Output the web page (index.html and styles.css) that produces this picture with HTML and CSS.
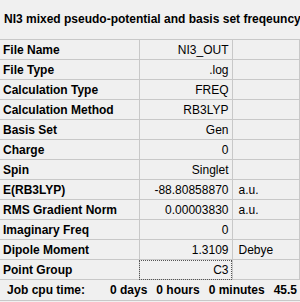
FILE: index.html
```html
<!DOCTYPE html>
<html lang="en">
<head>
    <meta charset="UTF-8">
    <title>NI3 Frequency Summary</title>
    <link rel="stylesheet" href="styles.css">
</head>
<body>
    <div class="summary">
        <div class="summary-title">NI3 mixed pseudo-potential and basis set freqeuncy</div>

        <table class="results">
            <colgroup>
                <col class="col-name">
                <col class="col-value">
                <col class="col-unit">
            </colgroup>
            <tr><th>File Name</th><td class="value">NI3_OUT</td><td></td></tr>
            <tr><th>File Type</th><td class="value">.log</td><td></td></tr>
            <tr><th>Calculation Type</th><td class="value">FREQ</td><td></td></tr>
            <tr><th>Calculation Method</th><td class="value">RB3LYP</td><td></td></tr>
            <tr><th>Basis Set</th><td class="value">Gen</td><td></td></tr>
            <tr><th>Charge</th><td class="value">0</td><td></td></tr>
            <tr><th>Spin</th><td class="value">Singlet</td><td></td></tr>
            <tr><th>E(RB3LYP)</th><td class="value">-88.80858870</td><td>a.u.</td></tr>
            <tr><th>RMS Gradient Norm</th><td class="value">0.00003830</td><td>a.u.</td></tr>
            <tr><th>Imaginary Freq</th><td class="value">0</td><td></td></tr>
            <tr><th>Dipole Moment</th><td class="value">1.3109</td><td>Debye</td></tr>
            <tr><th>Point Group</th><td class="value focused">C3</td><td></td></tr>
        </table>

        <div class="cpu-time">
            <span class="cpu-label">Job cpu time:</span>
            <div class="cpu-parts">
                <span>0 days</span>
                <span>0 hours</span>
                <span>0 minutes</span>
                <span>45.5</span>
            </div>
        </div>
    </div>
</body>
</html>
```

FILE: styles.css
```css
body {
    margin: 0;
    background: #f0f0f0;
    font-family: "Liberation Sans", Arial, sans-serif;
    color: #000;
}

.summary {
    width: 300px;
    height: 302px;
}

.summary-title {
    height: 39px;
    line-height: 39px;
    padding-left: 4px;
    font-size: 12px;
    font-weight: bold;
    white-space: nowrap;
}

.results {
    border-collapse: collapse;
    table-layout: fixed;
    width: 299px;
    font-size: 12px;
}

.col-name { width: 139px; }
.col-value { width: 93px; }
.col-unit { width: 67px; }

.results th,
.results td {
    height: 19px;
    padding: 0 3px;
    border-top: 1px solid #c8c8c8;
    border-bottom: 1px solid #c8c8c8;
    white-space: nowrap;
    overflow: hidden;
}

.results th {
    text-align: left;
    font-weight: bold;
    padding-left: 3px;
}

.results td {
    border-left: 1px solid #c8c8c8;
    padding-left: 6px;
}

.results td:last-child {
    border-right: 1px solid #c8c8c8;
}

.results .value {
    text-align: right;
    padding-right: 3px;
}

.results .focused {
    outline: 1px dotted #555;
    outline-offset: -1px;
}

.cpu-time {
    display: flex;
    height: 20px;
    align-items: center;
    padding: 0 3px 0 7px;
    font-size: 12px;
    font-weight: bold;
    white-space: nowrap;
    border-bottom: 1px solid #c8c8c8;
}

.cpu-label {
    width: 103px;
}

.cpu-parts {
    flex: 1;
    display: flex;
    justify-content: space-between;
}
```
